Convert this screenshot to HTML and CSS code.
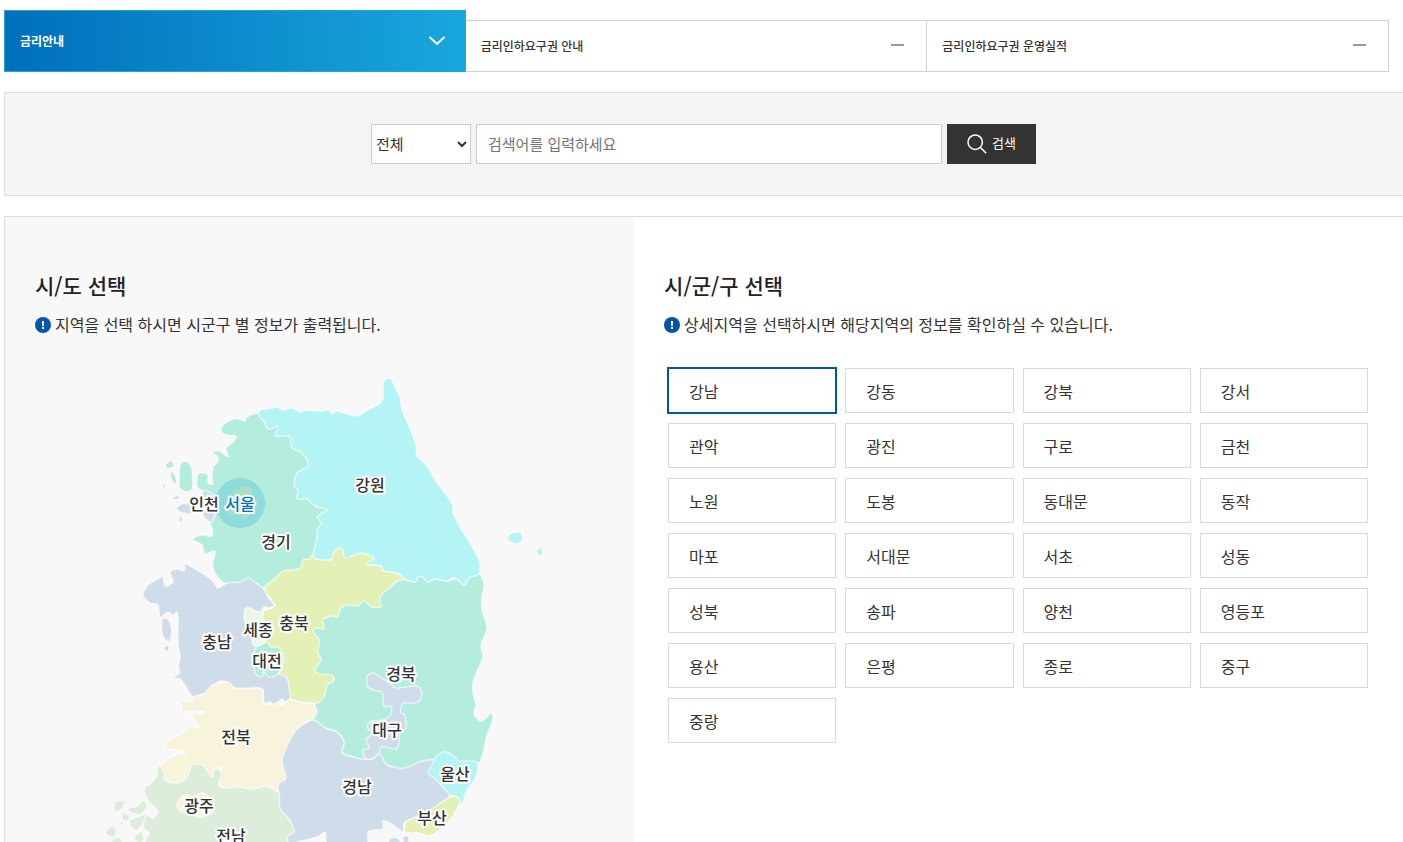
FILE: index.html
```html
<!DOCTYPE html>
<html lang="ko">
<head>
  <meta charset="UTF-8">
  <meta name="viewport" content="width=device-width, initial-scale=1.0">
  <title>금리안내</title>
  <link rel="stylesheet" href="styles.css">
</head>
<body>
  <nav class="tabs">
    <a href="#" class="tab active">금리안내
      <svg class="tab-icon" width="18" height="12" viewBox="0 0 18 12"><path d="M1.500 2l7.500 7L16.500 2" fill="none" stroke="#fff" stroke-width="2"/></svg>
    </a>
    <a href="#" class="tab">금리인하요구권 안내 <span class="minus"></span></a>
    <a href="#" class="tab">금리인하요구권 운영실적 <span class="minus"></span></a>
  </nav>

  <form class="search">
    <select class="search-type" aria-label="검색구분">
      <option>전체</option>
    </select>
    <input class="search-text" type="text" placeholder="검색어를 입력하세요" aria-label="검색어">
    <button class="search-btn" type="button">
      <svg width="20" height="20" viewBox="0 0 20 20" fill="none" stroke="#fff" stroke-width="1.500"><circle cx="8.200" cy="8.200" r="7.200"/><path d="M13.200 13.200l6 6"/></svg>
      검색
    </button>
  </form>

  <main class="region">
    <section class="panel panel-map">
      <h2 class="title">시/도 선택</h2>
      <p class="note">
        <svg width="16" height="16" viewBox="0 0 16 16"><circle cx="8" cy="8" r="8" fill="#0056a8"/><path d="M7 4h2v5H7zM7 10h2v2H7z" fill="#fff"/></svg>
        지역을 선택 하시면 시군구 별 정보가 출력됩니다.
      </p>
      <svg class="map" id="map" viewBox="85 370 470 500"></svg>
    </section>

    <section class="panel panel-list">
      <h2 class="title">시/군/구 선택</h2>
      <p class="note">
        <svg width="16" height="16" viewBox="0 0 16 16"><circle cx="8" cy="8" r="8" fill="#0056a8"/><path d="M7 4h2v5H7zM7 10h2v2H7z" fill="#fff"/></svg>
        상세지역을 선택하시면 해당지역의 정보를 확인하실 수 있습니다.
      </p>
      <div class="districts">
        <button type="button" class="district on">강남</button>
        <button type="button" class="district">강동</button>
        <button type="button" class="district">강북</button>
        <button type="button" class="district">강서</button>
        <button type="button" class="district">관악</button>
        <button type="button" class="district">광진</button>
        <button type="button" class="district">구로</button>
        <button type="button" class="district">금천</button>
        <button type="button" class="district">노원</button>
        <button type="button" class="district">도봉</button>
        <button type="button" class="district">동대문</button>
        <button type="button" class="district">동작</button>
        <button type="button" class="district">마포</button>
        <button type="button" class="district">서대문</button>
        <button type="button" class="district">서초</button>
        <button type="button" class="district">성동</button>
        <button type="button" class="district">성북</button>
        <button type="button" class="district">송파</button>
        <button type="button" class="district">양천</button>
        <button type="button" class="district">영등포</button>
        <button type="button" class="district">용산</button>
        <button type="button" class="district">은평</button>
        <button type="button" class="district">종로</button>
        <button type="button" class="district">중구</button>
        <button type="button" class="district">중랑</button>
      </div>
    </section>
  </main>

  <script src="map.js"></script>
</body>
</html>
```

FILE: styles.css
```css
* {
  margin: 0;
  padding: 0;
  box-sizing: border-box;
}

body {
  padding: 10px 0 0 4px;
  height: 100vh;
  overflow: hidden;
  background: #fff;
  color: #333;
  font-family: "Noto Sans CJK KR", sans-serif;
  font-size: 16px;
}

select,
input,
button {
  font-family: inherit;
  color: inherit;
}

/* 탭 */
.tabs {
  display: flex;
  align-items: flex-end;
  margin-bottom: 20px;
}

.tab {
  display: flex;
  justify-content: space-between;
  align-items: center;
  width: 33%;
  height: 52px;
  padding: 0 22px 2px 15px;
  border: 1px solid #d1d1d1;
  border-left: 0;
  color: #333;
  font-size: 12px;
  font-weight: 500;
  text-decoration: none;
}

.tab.active {
  height: 62px;
  padding-right: 19px;
  border: 1px solid #19a7dd;
  background: linear-gradient(to right, #006fbb, #19a7dd);
  color: #fff;
  font-weight: 700;
}

.tab-icon {
  margin-top: 2px;
}

.minus {
  width: 13px;
  height: 2px;
  background: #999;
}

/* 검색 */
.search {
  display: flex;
  justify-content: center;
  gap: 5px;
  padding: 31px 1px 31px 0;
  margin-bottom: 20px;
  border: 1px solid #ddd;
  border-right: 0;
  background: #f4f4f4;
}

.search-type,
.search-text {
  height: 40px;
  border: 1px solid #ccc;
  border-radius: 0;
  background: #fff;
  font-size: 15px;
}

.search-type {
  width: 100px;
  padding-bottom: 2px;
}

.search-text {
  width: 466px;
  padding: 0 11px 2px;
}

.search-text::placeholder {
  color: #757575;
}

.search-btn {
  display: flex;
  justify-content: center;
  align-items: center;
  gap: 5px;
  width: 89px;
  height: 40px;
  padding-bottom: 3px;
  border: 0;
  background: #333;
  color: #fff;
  font-size: 13px;
}

.search-btn svg {
  margin-top: 3px;
}

/* 지역 선택 */
.region {
  display: flex;
  border: 1px solid #ddd;
  border-width: 1px 0 0 1px;
}

.panel {
  padding: 51px 30px 0;
}

.panel-map {
  width: 45%;
  background: #f8f8f8;
}

.panel-list {
  flex: 1;
}

.title {
  margin-bottom: 8px;
  color: #222;
  font-size: 21px;
  font-weight: 500;
  line-height: 34px;
}

.note {
  display: flex;
  align-items: center;
  gap: 4px;
  line-height: 28px;
}

.note svg {
  margin-top: 2px;
}

.map {
  display: block;
  width: 470px;
  height: 500px;
  margin: 32px auto 0;
}

.map .area {
  stroke: #fff;
  stroke-opacity: .6;
  stroke-width: 1.5;
  stroke-linejoin: round;
}

.map .isle {
  stroke: none;
}

.map text {
  fill: #333;
  stroke: #fff;
  stroke-width: 4px;
  stroke-linejoin: round;
  paint-order: stroke;
  font-size: 16px;
  font-weight: 500;
  text-anchor: middle;
  cursor: pointer;
}

.map text.on {
  fill: #0072bc;
}

.districts {
  display: grid;
  grid-template-columns: repeat(4, 1fr);
  gap: 10px 9px;
  padding: 0 5px 0 4px;
  margin-top: 30px;
}

.district {
  height: 45px;
  padding: 0 20px;
  border: 1px solid #d9d9d9;
  background: #fff;
  font-size: 16px;
  text-align: left;
  cursor: pointer;
}

.district.on {
  border-color: #0056a8;
  box-shadow: 0 0 0 1px #0056a8;
}
```

FILE: map.js
```js
const GREEN = '#b4eddd';
const SKY = '#b4f4f4';
const LIME = '#e3f1b6';
const BLUE = '#cfdcea';
const CREAM = '#f8f4dc';
const LEAF = '#dceeda';

// 뒤에 오는 지역이 앞 지역 위에 그려진다
const areas = [
  { color: GREEN, points: '380,585 397,570 404,579 415,582 418,577 423,577 428,582 435,579 447,581 457,579 464,585 470,577 480,574 484,585 482,597 482,610 487,628 481,645 483,657 476,674 473,683 473,693 476,705 474,714 480,721 485,719 491,713 493,720 487,735 485,744 483,753 478,764 460,768 440,768 422,768 405,770 387,767 380,758 363,761 353,757 342,753 344,742 337,732 325,728 314,722 310,710 315,700 310,670 308,630 340,600' },
  { color: GREEN, points: '258,413 247,417 245,421 239,419 233,419 223,425 221,431 226,435 236,436 233,442 226,448 228,456 225,455 220,451 212,452 218,457 217,463 213,467 212,480 213,484 208,483 208,475 204,473 198,474 197,487 205,493 211,508 210,523 212,528 212,536 203,535 197,536 193,540 202,545 205,554 215,551 213,562 213,568 218,578 225,583 240,583 248,579 263,588 283,574 300,570 313,558 330,510 320,495 300,440 275,420' },
  { color: SKY, points: '258,414 262,409 268,409 277,407 283,410 292,408 300,412 307,410 320,411 328,410 333,414 337,411 357,416 367,410 378,405 383,398 383,385 386,379 391,379 394,385 400,398 402,410 410,428 416,445 417,456 427,466 437,483 452,503 453,513 460,527 468,540 479,560 479,574 470,577 464,585 457,579 452,578 447,581 435,579 428,582 423,577 418,577 415,582 404,579 397,573 383,571 381,566 367,565 345,562 330,560 323,561 315,559 313,555 317,537 317,530 321,523 317,517 320,514 327,510 315,506 307,499 297,499 298,490 294,485 297,473 307,467 308,462 302,453 292,448 290,437 285,436 275,436 278,427 268,429 264,422' },
  { color: LIME, points: '264,589 273,580 283,571 291,570 300,568 303,560 309,559 313,555 316,559 330,560 333,554 337,549 342,549 345,558 354,555 363,553 374,558 368,562 367,565 381,566 383,571 397,573 404,579 397,581 390,588 383,593 380,600 381,607 372,607 367,603 363,601 358,606 348,605 340,609 338,617 332,616 323,620 324,629 318,628 313,631 319,640 318,652 321,660 315,670 320,674 332,675 334,681 327,685 325,695 317,703 302,702 290,698 282,680 270,660 260,640 258,615 274,607 273,602' },
  { color: BLUE, points: '264,589 268,597 274,605 269,608 263,609 263,640 270,670 279,674 287,678 289,688 290,698 287,704 282,699 275,705 270,702 264,703 263,690 256,688 242,690 233,687 227,682 218,682 207,693 193,697 185,685 180,679 173,678 180,673 178,667 180,657 178,643 178,620 177,612 173,615 168,612 160,617 158,605 150,603 143,595 148,585 156,580 163,577 165,586 173,582 170,572 177,569 184,571 185,564 190,566 202,573 212,580 218,588 227,583 240,582 248,578 255,582' },
  { color: '#ebf7ea', points: '245,609 250,608 258,612 263,611 263,622 267,638 258,647 252,643 253,632 245,622' },
  { color: GREEN, points: '256,647 261,645 267,642 271,647 278,647 283,653 283,663 279,673 273,677 267,676 264,671 262,677 256,674 253,660' },
  { color: BLUE, points: '300,726 314,720 325,728 337,732 344,742 342,753 353,757 363,759 372,759 380,754 387,765 405,768 422,761 440,762 450,794 437,807 424,815 405,822 403,832 396,827 390,823 383,821 383,829 375,830 368,832 368,842 366,870 330,870 326,842 325,832 317,837 300,841 288,842 278,815 275,790 280,765 283,745' },
  { color: LEAF, points: '160,765 157,775 150,784 145,787 145,795 151,804 158,811 153,818 147,815 143,827 149,833 145,842 140,870 285,870 287,838 294,832 290,820 280,808 279,792 270,785 220,770 190,755' },
  { color: CREAM, points: '205,693 211,686 217,683 224,682 230,683 234,688 249,688 262,689 263,702 272,705 277,702 282,705 290,699 303,703 313,703 317,712 312,719 298,728 290,740 282,760 286,778 279,783 277,792 270,787 261,787 253,789 237,787 225,788 219,785 222,770 215,768 212,777 207,770 202,765 192,765 187,777 181,782 175,783 166,781 163,770 161,765 172,756 185,753 178,750 167,749 166,743 171,739 180,735 190,726 199,728 192,715 203,714 203,711 183,712 182,705 176,703 184,701 193,701 193,697' },
  { color: CREAM, points: '177,803 185,795 194,796 203,793 213,802 212,813 200,817 187,813 180,811' },
  { color: SKY, points: '443,752 449,753 455,757 458,761 468,761 478,763 476,777 467,790 462,804 457,797 450,795 443,787 434,778 428,773 432,765 436,757' },
  { color: LIME, points: '450,797 457,797 460,803 456,810 452,817 443,827 430,836 420,833 405,832 406,822 413,818 423,815 433,808' },
  { color: BLUE, points: '367,677 373,673 382,678 392,685 395,688 406,687 417,686 422,692 420,700 415,703 403,703 401,708 401,713 405,715 406,728 400,733 399,741 397,749 390,748 381,747 379,753 372,759 365,758 363,750 369,748 366,740 372,733 367,727 372,721 383,720 391,714 391,706 384,706 382,692 376,691 368,687' },
  { color: BLUE, points: '202,493 207,491 218,498 229,500 217,510 214,518 210,522 203,515 206,505' }
];

// 섬
const isles = [
  { color: GREEN, points: '181,464 186,462 191,468 192,488 186,491 180,487 180,474' },
  { color: GREEN, points: '166,465 171,461 173,466 168,468' },
  { color: GREEN, points: '171,472 175,476 176,483 172,480' },
  { color: GREEN, points: '163,486 165,484 164,488' },
  { color: BLUE, points: '177,508 184,504 192,506 191,513 182,512' },
  { color: BLUE, points: '173,498 178,496 178,499' },
  { color: BLUE, points: '179,518 182,518 181,522' },
  { color: SKY, points: '508,538 512,534 520,533 522,539 518,543 512,542' },
  { color: SKY, points: '537,551 541,548 542,553 540,555' },
  { color: BLUE, points: '163,619 168,620 171,630 169,641 164,637 162,628' },
  { color: BLUE, points: '165,647 168,646 168,650 165,650' },
  { color: LEAF, points: '114,808 118,801 124,802 122,808 117,811' },
  { color: LEAF, points: '128,809 137,807 143,801 146,807 141,814 134,813' },
  { color: LEAF, points: '123,813 129,817 127,821 123,818' },
  { color: LEAF, points: '107,831 112,827 116,831 114,836 108,835' },
  { color: LEAF, points: '121,822 123,823 122,825' },
  { color: LEAF, points: '130,822 134,819 146,815 142,824 135,830' },
  { color: LEAF, points: '135,838 141,832 143,840 139,842' },
  { color: LEAF, points: '113,840 120,838 121,846 112,846' },
  { color: BLUE, points: '389,841 395,838 400,842 397,850 390,848' },
  { color: BLUE, points: '404,837 408,837 408,842 404,842' }
];

const labels = [
  ['강원', 370, 485], ['인천', 204, 504], ['서울', 240, 504], ['경기', 276, 542],
  ['충북', 294, 623], ['세종', 258, 630], ['충남', 217, 642], ['대전', 267, 661],
  ['경북', 401, 674], ['대구', 387, 730], ['전북', 236, 737], ['경남', 357, 787],
  ['울산', 455, 774], ['광주', 199, 806], ['부산', 432, 818], ['전남', 231, 836]
];

// 점들을 부드러운 곡선으로 잇는다
function toPath(points) {
  const p = points.split(' ').map(s => s.split(',').map(Number));
  const n = p.length;
  let d = 'M' + p[0];
  for (let i = 0; i < n; i++) {
    const a = p[(i - 1 + n) % n], b = p[i], c = p[(i + 1) % n], e = p[(i + 2) % n];
    d += `C${b[0] + (c[0] - a[0]) / 7} ${b[1] + (c[1] - a[1]) / 7} ${c[0] - (e[0] - b[0]) / 7} ${c[1] - (e[1] - b[1]) / 7} ${c[0]} ${c[1]}`;
  }
  return d + 'Z';
}

const seoul = '225,503 232,497 233,491 240,489 243,486 252,489 253,497 257,504 252,512 245,518 238,515 230,514';

document.getElementById('map').innerHTML =
  isles.map(a => `<path class="isle" fill="${a.color}" d="${toPath(a.points)}"/>`).join('') +
  areas.map(a => `<path class="area" fill="${a.color}" d="${toPath(a.points)}"/>`).join('') +
  `<circle cx="240" cy="503" r="25" fill="#8ddbdc"/><path fill="#abdfc0" d="${toPath(seoul)}"/>` +
  labels.map(l => `<text class="${l[0] === '서울' ? 'on' : ''}" x="${l[1]}" y="${l[2] + 6}">${l[0]}</text>`).join('');
```
